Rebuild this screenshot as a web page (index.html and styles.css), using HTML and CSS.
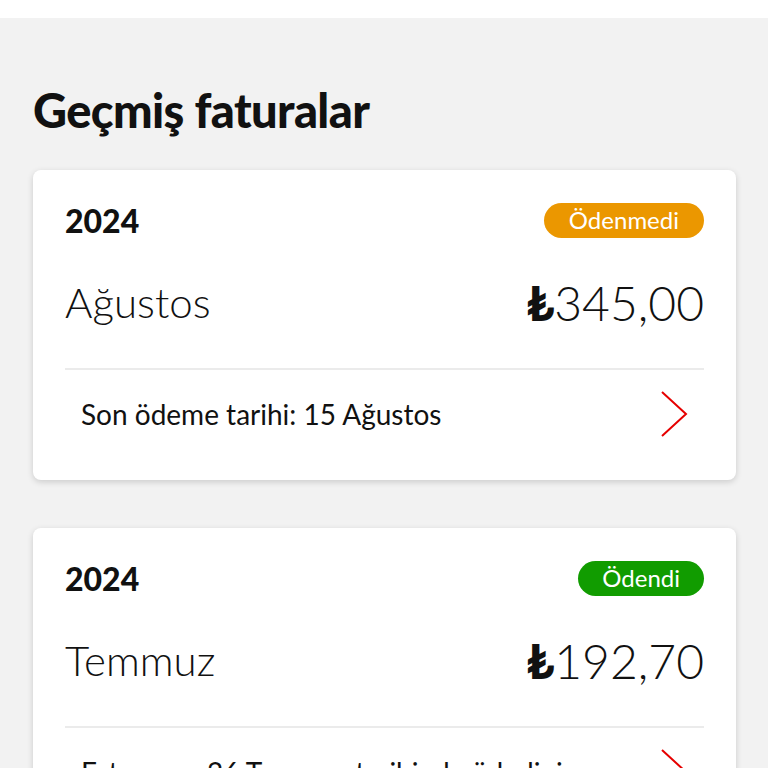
FILE: index.html
```html
<!DOCTYPE html>
<html lang="tr">

<head>
    <meta charset="UTF-8">
    <meta name="viewport" content="width=device-width, initial-scale=1.0">
    <title>Geçmiş faturalar</title>
    <link rel="stylesheet" href="styles.css">
</head>

<body>
    <div class="topbar"></div>
    <div class="page">
        <h1 class="title">Geçmiş faturalar</h1>

        <div class="bill-card">
            <div class="bill-head">
                <span class="year">2024</span>
                <span class="badge unpaid">Ödenmedi</span>
            </div>
            <div class="bill-main">
                <span class="month">Ağustos</span>
                <span class="amount"><b>₺</b>345,00</span>
            </div>
            <div class="bill-foot">
                <span class="note">Son ödeme tarihi: 15 Ağustos</span>
                <svg class="chevron" width="28" height="48" viewBox="0 0 28 48">
                    <path d="M2 2 L26 24 L2 46" fill="none" stroke="#e60000" stroke-width="2" />
                </svg>
            </div>
        </div>

        <div class="bill-card">
            <div class="bill-head">
                <span class="year">2024</span>
                <span class="badge paid">Ödendi</span>
            </div>
            <div class="bill-main">
                <span class="month">Temmuz</span>
                <span class="amount"><b>₺</b>192,70</span>
            </div>
            <div class="bill-foot">
                <span class="note">Faturanızı 26 Temmuz tarihinde ödediniz</span>
                <svg class="chevron" width="28" height="48" viewBox="0 0 28 48">
                    <path d="M2 2 L26 24 L2 46" fill="none" stroke="#e60000" stroke-width="2" />
                </svg>
            </div>
        </div>
    </div>
</body>

</html>
```

FILE: styles.css
```css
body {
    margin: 0;
    font-family: Lato, "Open Sans", sans-serif;
    background-color: #f2f2f2;
    color: #111;
}

.topbar {
    height: 18px;
    background: #fff;
}

.page {
    padding: 0 32px 0 33px;
}

.title {
    margin: 0;
    padding-top: 66px;
    height: 52px;
    font-size: 47px;
    font-weight: 900;
    line-height: 52px;
    letter-spacing: -0.6px;
}

.bill-card {
    margin-top: 34px;
    margin-bottom: 48px;
    background: #fff;
    border-radius: 8px;
    box-shadow: 0 2px 6px rgba(0, 0, 0, 0.16);
    padding: 33px 32px 42px 32px;
}

.bill-card + .bill-card {
    margin-top: 0;
}

.bill-head {
    display: flex;
    justify-content: space-between;
    align-items: center;
    height: 35px;
}

.year {
    font-size: 32px;
    font-weight: 900;
}

.badge {
    height: 35px;
    line-height: 34px;
    padding: 0 25px;
    border-radius: 18px;
    color: #fff;
    font-size: 24px;
}

.badge.unpaid {
    background: #eb9700;
}

.badge.paid {
    background: #119c00;
    padding: 0 24px;
}

.bill-main {
    display: flex;
    justify-content: space-between;
    align-items: center;
    margin-top: 36px;
    height: 56px;
    padding-bottom: 38px;
    border-bottom: 2px solid #ebebeb;
}

.month {
    font-size: 42px;
    font-weight: 300;
}

.amount {
    font-size: 48px;
    font-weight: 300;
}

.amount b {
    font-weight: 900;
}

.bill-foot {
    display: flex;
    justify-content: space-between;
    align-items: center;
    padding: 20px 16px 0 16px;
    height: 48px;
}

.note {
    font-size: 28px;
}
```
